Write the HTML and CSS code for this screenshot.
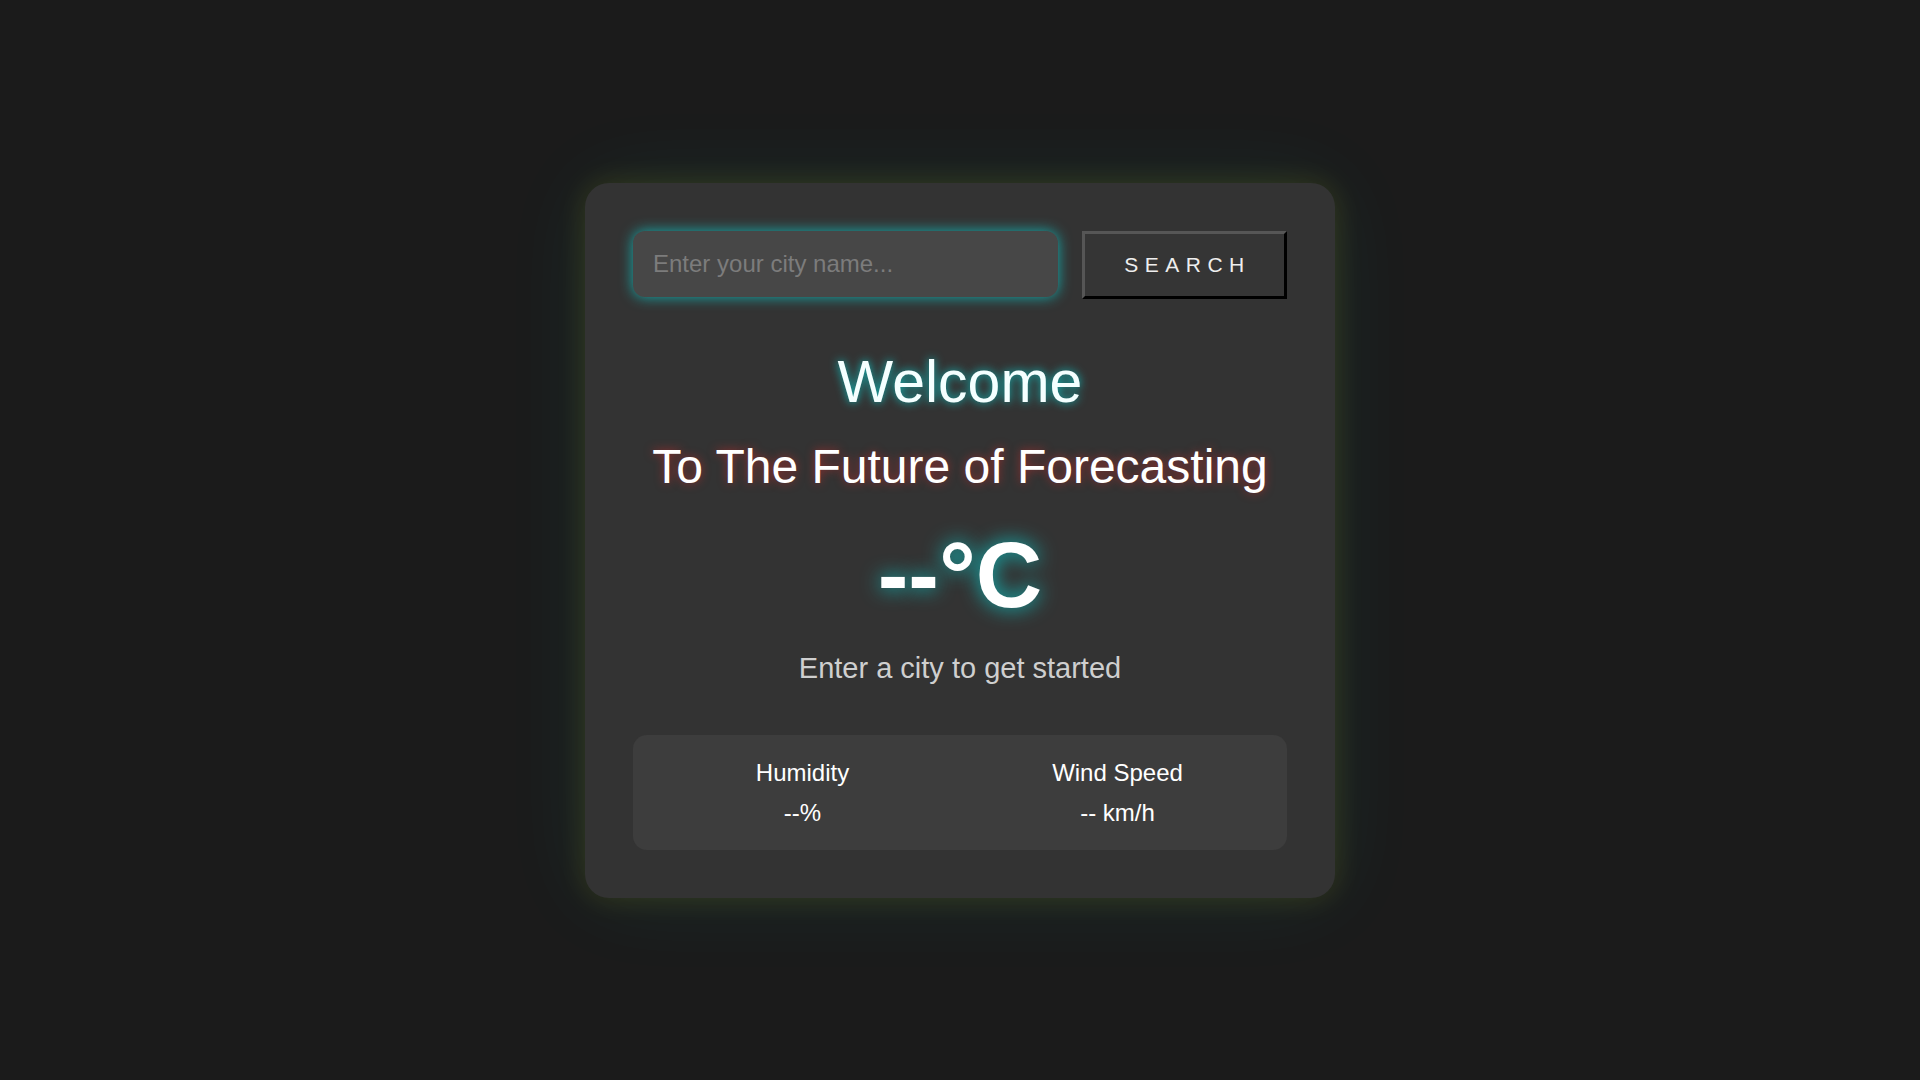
FILE: index.html
```html
<!DOCTYPE html>
<html lang="en">
<head>
<meta charset="utf-8">
<title>Weather</title>
<link rel="stylesheet" href="styles.css">
</head>
<body>
  <main class="card">
    <div class="search-row">
      <input class="city-input" type="text" placeholder="Enter your city name...">
      <button class="search-btn" type="button">SEARCH</button>
    </div>
    <h1 class="welcome">Welcome</h1>
    <h2 class="tagline">To The Future of Forecasting</h2>
    <div class="temp">--°C</div>
    <p class="desc">Enter a city to get started</p>
    <div class="stats">
      <div class="stat">
        <div class="stat-label">Humidity</div>
        <div class="stat-value">--%</div>
      </div>
      <div class="stat">
        <div class="stat-label">Wind Speed</div>
        <div class="stat-value">-- km/h</div>
      </div>
    </div>
  </main>
</body>
</html>
```
FILE: styles.css
```css
* { box-sizing: border-box; }
html, body { margin: 0; padding: 0; }
body {
  background: #1b1b1b;
  font-family: "Liberation Sans", Arial, sans-serif;
  color: #fff;
  min-height: 100vh;
  display: flex;
  align-items: center;
  justify-content: center;
}
.card {
  width: 750px;
  padding: 48px;
  background: #333333;
  border-radius: 24px;
  box-shadow: 0 0 30px rgba(255, 255, 0, 0.12), 0 0 90px rgba(0, 255, 255, 0.07);
  display: flex;
  flex-direction: column;
  align-items: stretch;
  text-align: center;
}
.search-row {
  display: flex;
  align-items: flex-start;
  gap: 24px;
  height: 68px;
}
.city-input {
  flex: 1;
  height: 66px;
  border: none;
  outline: none;
  border-radius: 12px;
  background: #474747;
  color: #fff;
  font-family: inherit;
  font-size: 24px;
  padding: 0 20px;
  box-shadow: 0 0 14px rgba(0, 255, 255, 0.6);
}
.city-input::placeholder { color: #7c7c7c; }
.search-btn {
  width: 205px;
  height: 68px;
  background: #353535;
  color: #eeeeee;
  font-family: inherit;
  font-size: 21px;
  letter-spacing: 6.5px;
  padding: 0 0 0 6px;
  border-style: solid;
  border-width: 3px;
  border-color: #565656 #000 #000 #565656;
  cursor: pointer;
}
.welcome {
  margin: 49px 0 0;
  font-size: 59px;
  line-height: 68px;
  font-weight: normal;
  color: #f4ffff;
  text-shadow: 0 0 10px rgba(0, 255, 255, 0.7);
}
.tagline {
  margin: 23px 0 0;
  font-size: 48px;
  line-height: 55px;
  font-weight: normal;
  color: #fff;
  text-shadow: 0 0 10px rgba(255, 40, 40, 0.5);
}
.temp {
  margin-top: 29px;
  font-size: 92px;
  line-height: 105px;
  font-weight: bold;
  color: #fff;
  text-shadow: 0 0 20px rgba(0, 255, 255, 0.7);
}
.desc {
  margin: 24px 0 0;
  font-size: 29px;
  line-height: 33px;
  color: #cfcfcf;
}
.stats {
  margin-top: 50px;
  background: #3d3d3d;
  border-radius: 14px;
  padding: 24px 12px 23px;
  display: grid;
  grid-template-columns: 1fr 1fr;
}
.stat-label,
.stat-value {
  font-size: 24px;
  line-height: 28px;
  color: #fff;
}
.stat-value { margin-top: 12px; }
```
